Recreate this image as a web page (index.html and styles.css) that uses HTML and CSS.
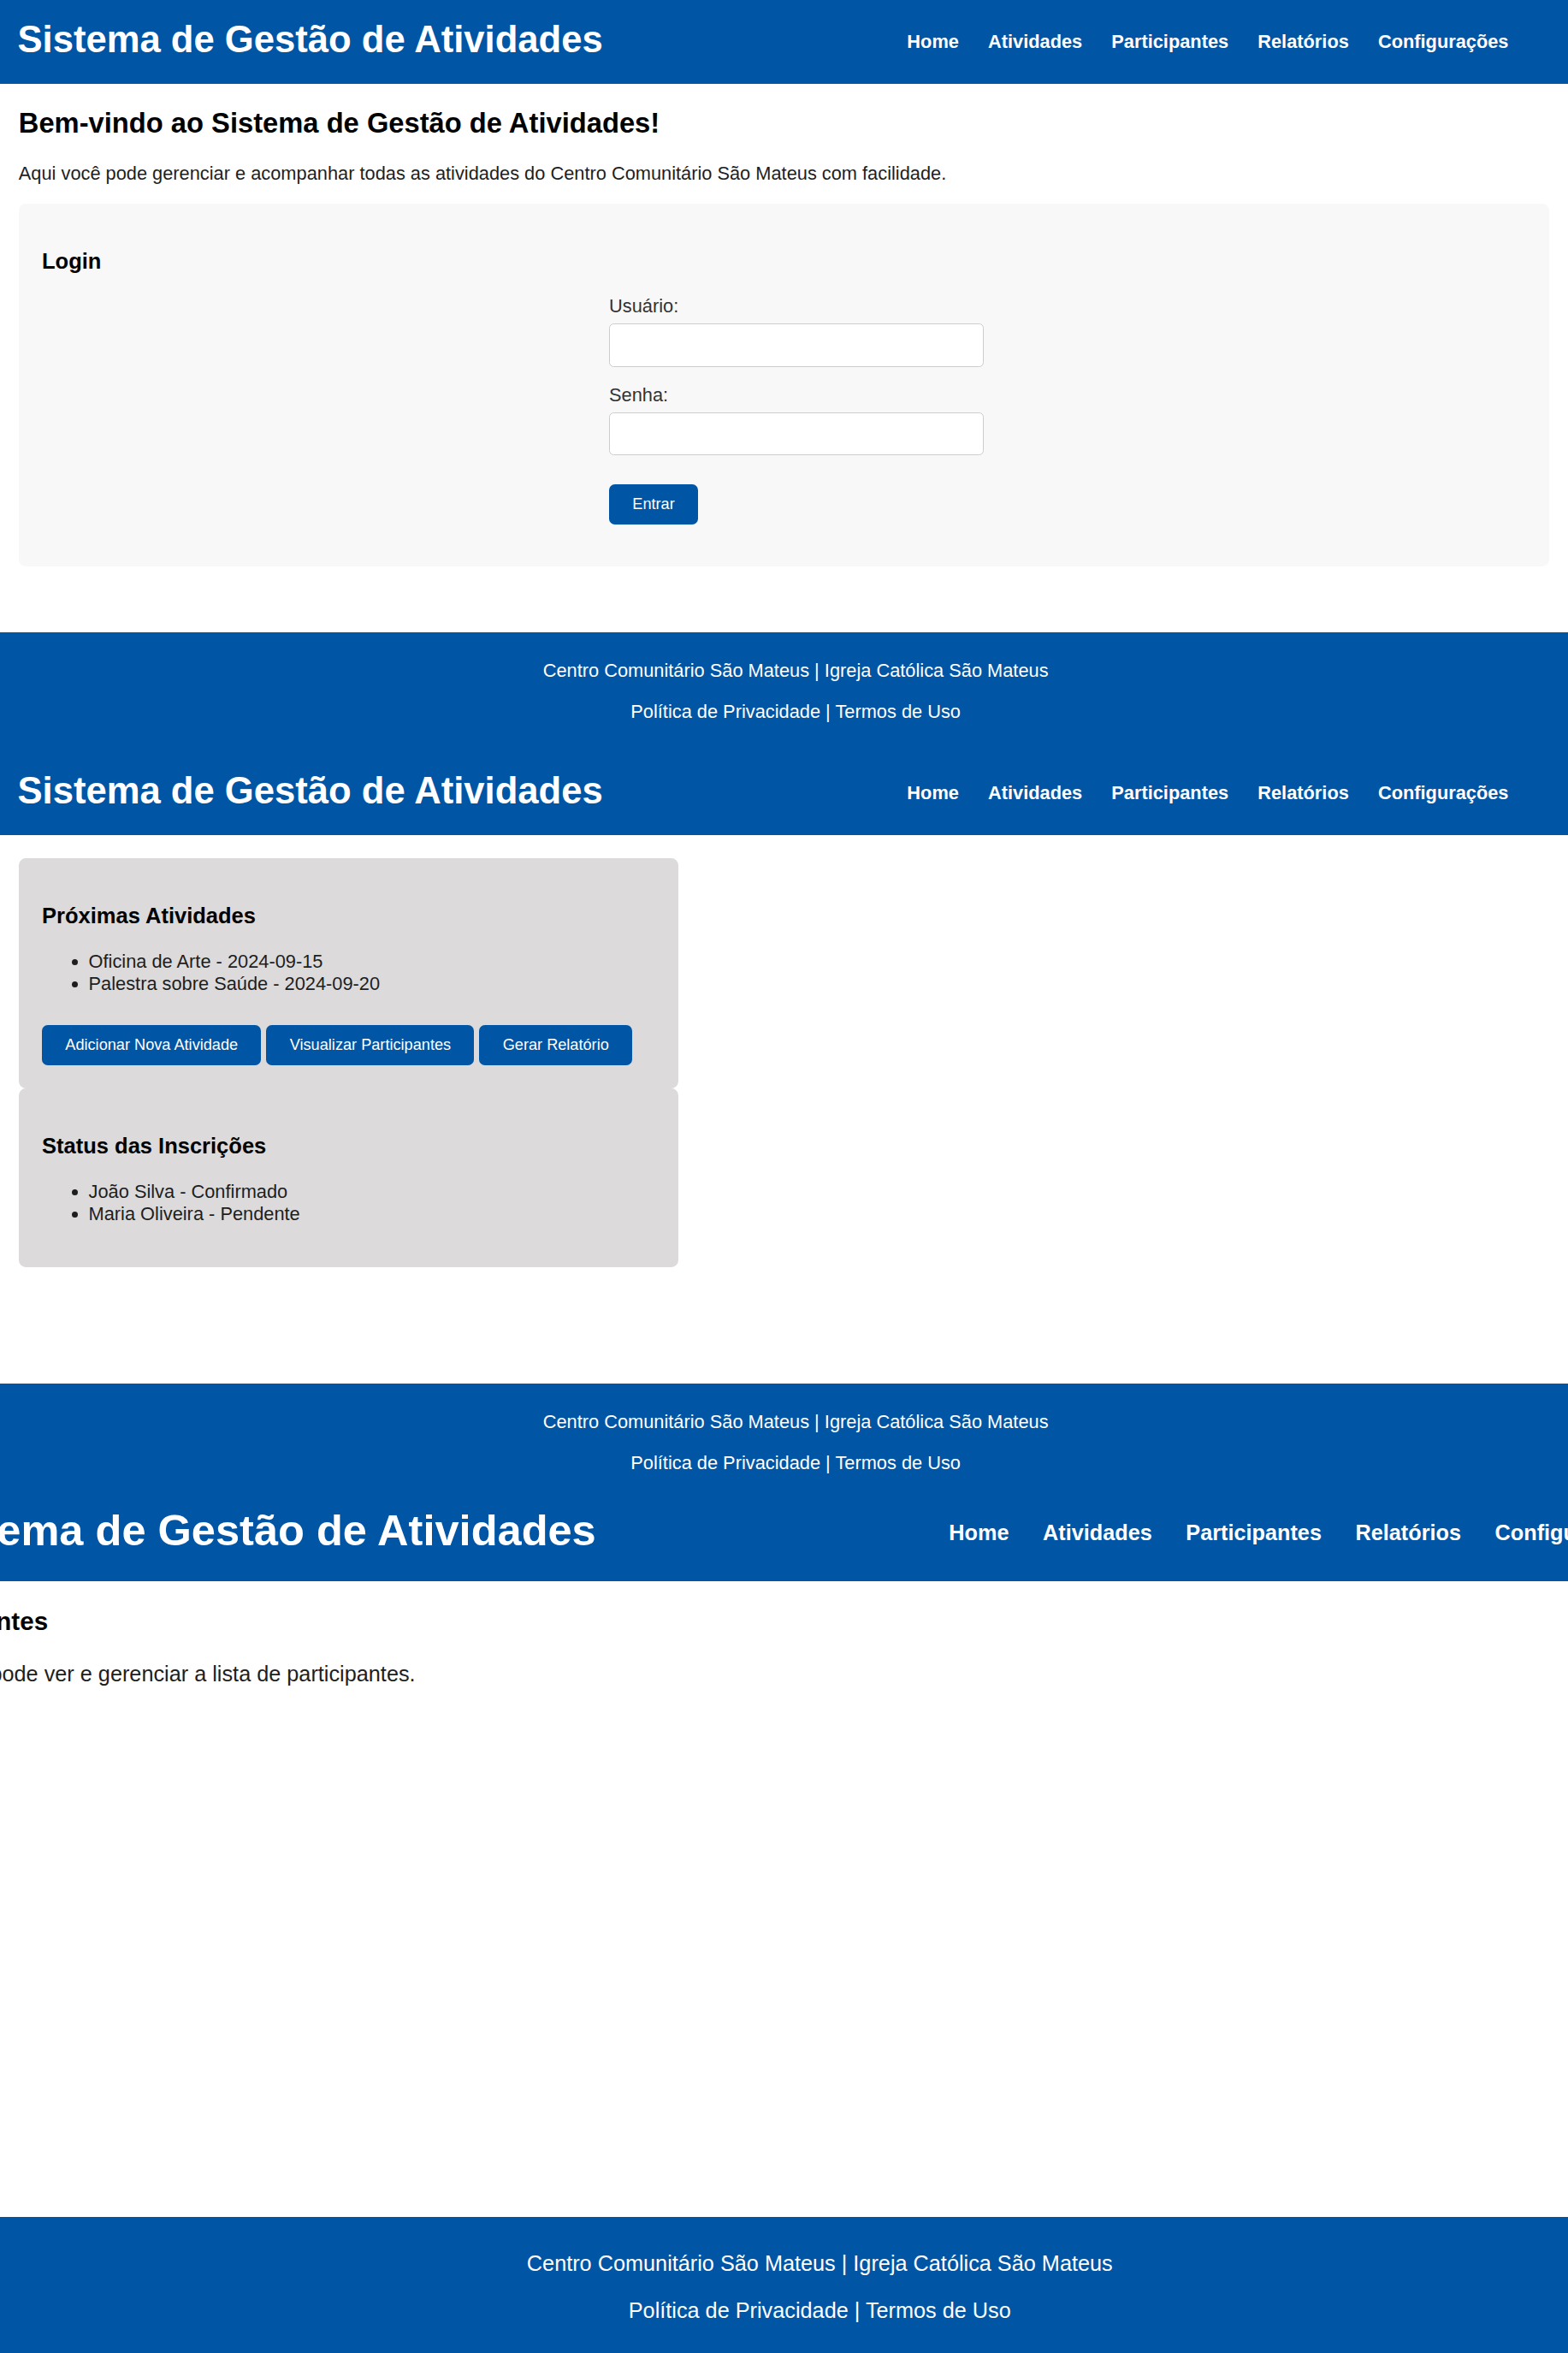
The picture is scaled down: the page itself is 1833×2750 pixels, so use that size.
FILE: index.html
```html
<!DOCTYPE html>
<html lang="pt-BR">
<head>
<meta charset="utf-8">
<title>Sistema de Gestão de Atividades</title>
<link rel="stylesheet" href="styles.css">
</head>
<body>

<div class="shot">
  <header class="topbar">
    <h1 class="brand">Sistema de Gestão de Atividades</h1>
    <nav class="menu">
      <a href="#">Home</a>
      <a href="#">Atividades</a>
      <a href="#">Participantes</a>
      <a href="#">Relatórios</a>
      <a href="#">Configurações</a>
    </nav>
  </header>
  <main class="content">
    <h2 class="page-title">Bem-vindo ao Sistema de Gestão de Atividades!</h2>
    <p class="lead">Aqui você pode gerenciar e acompanhar todas as atividades do Centro Comunitário São Mateus com facilidade.</p>
    <section class="login-card">
      <h3 class="card-title">Login</h3>
      <form class="login-form">
        <label class="field-label" for="u">Usuário:</label>
        <input class="field" id="u" type="text">
        <label class="field-label" for="s">Senha:</label>
        <input class="field" id="s" type="password">
        <button class="btn" type="button">Entrar</button>
      </form>
    </section>
  </main>
  <footer class="footer">
    <p>Centro Comunitário São Mateus | Igreja Católica São Mateus</p>
    <p>Política de Privacidade | Termos de Uso</p>
  </footer>
</div>

<div class="shot">
  <header class="topbar">
    <h1 class="brand">Sistema de Gestão de Atividades</h1>
    <nav class="menu">
      <a href="#">Home</a>
      <a href="#">Atividades</a>
      <a href="#">Participantes</a>
      <a href="#">Relatórios</a>
      <a href="#">Configurações</a>
    </nav>
  </header>
  <main class="content dashboard">
    <section class="panel">
      <h3 class="card-title">Próximas Atividades</h3>
      <ul class="list">
        <li>Oficina de Arte - 2024-09-15</li>
        <li>Palestra sobre Saúde - 2024-09-20</li>
      </ul>
      <button class="btn" type="button">Adicionar Nova Atividade</button>
      <button class="btn" type="button">Visualizar Participantes</button>
      <button class="btn" type="button">Gerar Relatório</button>
    </section>
    <section class="panel">
      <h3 class="card-title">Status das Inscrições</h3>
      <ul class="list">
        <li>João Silva - Confirmado</li>
        <li>Maria Oliveira - Pendente</li>
      </ul>
    </section>
  </main>
  <footer class="footer footer-cut">
    <p>Centro Comunitário São Mateus | Igreja Católica São Mateus</p>
    <p>Política de Privacidade | Termos de Uso</p>
  </footer>
</div>

<div class="clip">
  <div class="shot-wide">
    <header class="topbar">
      <h1 class="brand">Sistema de Gestão de Atividades</h1>
      <nav class="menu">
        <a href="#">Home</a>
        <a href="#">Atividades</a>
        <a href="#">Participantes</a>
        <a href="#">Relatórios</a>
        <a href="#">Configurações</a>
      </nav>
    </header>
    <main class="content">
      <div class="shifted">
        <h3 class="card-title">Participantes</h3>
        <p class="lead">Aqui você pode ver e gerenciar a lista de participantes.</p>
      </div>
    </main>
    <footer class="footer footer-last">
      <p>Centro Comunitário São Mateus | Igreja Católica São Mateus</p>
      <p>Política de Privacidade | Termos de Uso</p>
    </footer>
  </div>
</div>

</body>
</html>
```

FILE: styles.css
```css
html, body {
  margin: 0;
  padding: 0;
}

body {
  font-family: "Liberation Sans", Arial, sans-serif;
  font-size: 16px;
  color: #333;
  background: #fff;
}

.shot {
  zoom: 1.363;
}

.clip {
  overflow: hidden;
}

.shot-wide {
  zoom: 1.58;
  width: 1345px;
  margin-left: -76px;
}

/* header */
.topbar {
  display: flex;
  align-items: center;
  justify-content: space-between;
  height: 72px;
  padding: 0 51px 0 15px;
  background: #0055a5;
  color: #fff;
}

.brand {
  margin: 0 0 4px;
  font-size: 32px;
  font-weight: bold;
  color: #fff;
}

.menu {
  display: flex;
  gap: 25px;
}

.menu a {
  color: #fff;
  font-weight: bold;
  font-size: 16px;
  text-decoration: none;
}

/* main */
.content {
  display: flow-root;
  box-sizing: border-box;
  min-height: 470px;
  padding: 0 16px;
}

.dashboard {
  padding-top: 20px;
}

.page-title {
  font-size: 24px;
  margin: 0.83em 0;
  color: #000;
}

.lead {
  margin: 16px 0;
  color: #1e1e1e;
}

.card-title {
  font-size: 18.72px;
  margin: 1em 0;
  color: #000;
}

/* login */
.login-card {
  background: #f8f8f8;
  border-radius: 6px;
  padding: 20px;
  display: flow-root;
}

.login-form {
  width: 300px;
  margin: 0 auto 16px;
}

.field-label {
  display: block;
  margin-bottom: 5px;
  color: #333;
}

.field {
  display: block;
  width: 300px;
  padding: 10px;
  margin: 0 0 15px;
  border: 1px solid #ccc;
  border-radius: 4px;
  background: #fff;
  font: 13.333px "Liberation Sans", Arial, sans-serif;
}

.btn {
  margin-top: 10px;
  padding: 10px 20px;
  border: 0;
  border-radius: 5px;
  background: #0055a5;
  color: #fff;
  font: 13.333px/14.6px "Liberation Sans", Arial, sans-serif;
}

/* dashboard panels */
.panel {
  width: 526px;
  padding: 20px;
  background: #dcdadb;
  border-radius: 6px;
  display: flow-root;
}

.list {
  margin: 16px 0;
  padding-left: 40px;
  color: #1e1e1e;
}

.shifted {
  margin-left: -22px;
}

/* footer */
.footer {
  background: #0055a5;
  color: #fff;
  text-align: center;
  padding: 8px 0 8px 20px;
  display: flow-root;
}

.footer p {
  margin: 16px 0;
}

.footer-cut {
  box-sizing: border-box;
  height: 86.6px;
  overflow: hidden;
}

.footer-last {
  padding: 9.5px 0 8px 20px;
}
```
